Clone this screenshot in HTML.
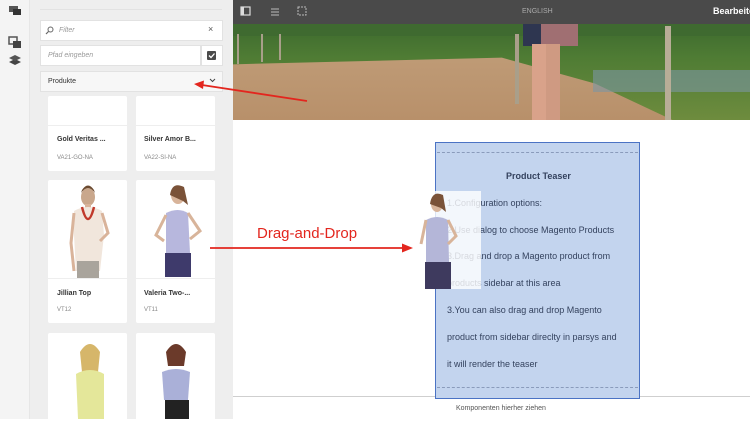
<!DOCTYPE html>
<html><head><meta charset="utf-8"><style>
*{margin:0;padding:0;box-sizing:border-box}
body{width:750px;height:419px;overflow:hidden;position:relative;background:#fff;font-family:"Liberation Sans",sans-serif}
.a{position:absolute}
.rail{left:0;top:0;width:30px;height:419px;background:#f4f4f4;border-right:1px solid #e6e6e6}
.panel{left:30px;top:0;width:203px;height:419px;background:#eeeeee}
.box{background:#fff;border:1px solid #e2e2e2;font-size:7px;color:#999}
.card{background:#fff;border-radius:2px}
.ct{font-size:7px;font-weight:bold;color:#333}
.cs{font-size:6px;color:#888}
.teaser{left:435px;top:142px;width:205px;height:257px;background:#c3d4ee;border:1.5px solid #4b73c4}
.tt{font-size:9px;color:#34425e;white-space:nowrap}
</style></head><body>
<div class="a rail"></div>
<svg class="a" style="left:8px;top:5px" width="14" height="60" viewBox="0 0 14 60">
<rect x="1" y="1" width="9" height="6" fill="#555"/><rect x="5" y="4" width="8" height="6" fill="#333"/>
<rect x="1" y="32" width="8" height="7" fill="none" stroke="#555" stroke-width="1.5"/><rect x="5" y="36" width="8" height="7" fill="#444"/>
<path d="M7 54 L13 57 L7 60 L1 57Z" fill="#444"/><path d="M7 50 L13 53 L7 56 L1 53Z" fill="#555"/>
</svg>
<div class="a panel"></div>
<div class="a" style="left:40px;top:9px;width:182px;height:1px;background:#e2e2e2"></div>
<div class="a box" style="left:40px;top:20px;width:183px;height:21px;padding:6px 0 0 18px;font-style:italic">Filter</div>
<svg class="a" style="left:45px;top:26px" width="9" height="9"><circle cx="5.5" cy="3.5" r="2.5" fill="none" stroke="#666" stroke-width="1"/><path d="M3.5 5.5 L1 8" stroke="#666" stroke-width="1.2"/></svg>
<div class="a" style="left:208px;top:24px;font-size:9px;color:#555">×</div>
<div class="a box" style="left:40px;top:45px;width:161px;height:21px;padding:6px 0 0 7px;font-style:italic">Pfad eingeben</div>
<div class="a box" style="left:201px;top:45px;width:22px;height:21px"></div>
<div class="a" style="left:207px;top:51px;width:9px;height:9px;background:#4a4a4a;border-radius:1px"></div>
<svg class="a" style="left:207px;top:51px" width="9" height="9"><path d="M2 4.5 L4 6.5 L7.5 2.5" stroke="#fff" stroke-width="1.3" fill="none"/></svg>
<div class="a box" style="left:40px;top:71px;width:183px;height:21px;padding:6px 0 0 7px;color:#333;background:#f7f7f7">Produkte</div>
<svg class="a" style="left:209px;top:78px" width="7" height="5"><path d="M1 1 L3.5 3.5 L6 1" stroke="#444" fill="none"/></svg>

<div class="a card" style="left:48px;top:96px;width:79px;height:75px"></div>
<div class="a" style="left:48px;top:125px;width:79px;height:1px;background:#eee"></div>
<div class="a ct" style="left:57px;top:136px">Gold Veritas ...</div>
<div class="a cs" style="left:57px;top:155px">VA21-GO-NA</div>
<div class="a card" style="left:136px;top:96px;width:79px;height:75px"></div>
<div class="a" style="left:136px;top:125px;width:79px;height:1px;background:#eee"></div>
<div class="a ct" style="left:144px;top:136px">Silver Amor B...</div>
<div class="a cs" style="left:144px;top:155px">VA22-SI-NA</div>

<div class="a card" style="left:48px;top:180px;width:79px;height:143px"></div>
<div class="a" style="left:48px;top:278px;width:79px;height:1px;background:#eee"></div>
<svg class="a" style="left:66px;top:183px" width="50" height="95">
<ellipse cx="22" cy="14" rx="7" ry="9" fill="#c9a78c"/><path d="M15 10 Q22 0 29 10 L28 7 Q22 -2 16 7Z" fill="#6b4a30"/>
<rect x="19" y="21" width="6" height="5" fill="#d9b39a"/>
<path d="M8 28 Q22 20 36 28 L38 52 L34 88 L10 88 L8 52Z" fill="#f1e6dc"/>
<path d="M16 24 Q22 48 28 24" stroke="#c0392b" stroke-width="2.5" fill="none"/>
<rect x="11" y="78" width="22" height="17" fill="#a9a49c"/>
<path d="M36 30 L42 50 L34 58" stroke="#d9b39a" stroke-width="3" fill="none"/><path d="M8 30 L5 60 L8 88" stroke="#d9b39a" stroke-width="3" fill="none"/>
</svg>
<div class="a ct" style="left:57px;top:290px">Jillian Top</div>
<div class="a cs" style="left:57px;top:307px">VT12</div>
<div class="a card" style="left:136px;top:180px;width:79px;height:143px"></div>
<div class="a" style="left:136px;top:278px;width:79px;height:1px;background:#eee"></div>
<svg class="a" style="left:150px;top:183px" width="60" height="95">
<ellipse cx="28" cy="12" rx="7" ry="9" fill="#d8b49a"/><path d="M20 12 Q22 -2 34 4 L38 22 L33 18Z" fill="#7a5238"/>
<path d="M16 30 Q28 24 38 30 L40 70 L16 70Z" fill="#b7b7dd"/>
<rect x="15" y="70" width="26" height="24" fill="#3e3a6b"/>
<path d="M38 30 L50 48 L40 56" stroke="#d8b49a" stroke-width="3" fill="none"/><path d="M16 32 L6 52 L14 58" stroke="#d8b49a" stroke-width="3" fill="none"/>
</svg>
<div class="a ct" style="left:144px;top:290px">Valeria Two-...</div>
<div class="a cs" style="left:144px;top:307px">VT11</div>

<div class="a card" style="left:48px;top:333px;width:79px;height:90px"></div>
<svg class="a" style="left:66px;top:336px" width="50" height="83">
<ellipse cx="24" cy="18" rx="7" ry="9" fill="#e0c0a4"/><path d="M14 16 Q24 0 34 16 L32 36 L16 36Z" fill="#d6b66a"/>
<path d="M10 38 Q24 30 38 38 L38 83 L12 83Z" fill="#e4e79a"/>
</svg>
<div class="a card" style="left:136px;top:333px;width:79px;height:90px"></div>
<svg class="a" style="left:150px;top:336px" width="50" height="83">
<ellipse cx="26" cy="18" rx="7" ry="9" fill="#d8b49a"/><path d="M16 16 Q26 0 36 16 L34 30 L18 30Z" fill="#6b3a2a"/>
<path d="M12 36 Q26 30 40 36 L38 64 L14 64Z" fill="#aab0d8"/>
<rect x="15" y="64" width="24" height="19" fill="#222"/>
</svg>

<div class="a" style="left:233px;top:0;width:517px;height:24px;background:#4a4a4a"></div>
<svg class="a" style="left:240px;top:6px" width="70" height="12">
<rect x="1" y="1" width="9" height="8" fill="none" stroke="#ddd" stroke-width="1.2"/><rect x="1" y="1" width="3" height="8" fill="#ddd"/>
<path d="M31 3 H39 M31 6 H39 M31 9 H39" stroke="#bbb" stroke-width="1"/>
<rect x="58" y="1" width="8" height="8" fill="none" stroke="#bbb" stroke-width="1" stroke-dasharray="2 1"/>
</svg>
<div class="a" style="left:522px;top:8px;font-size:7px;color:#aaa">ENGLISH</div>
<div class="a" style="left:713px;top:6px;font-size:9px;font-weight:bold;color:#fff">Bearbeite</div>

<div class="a" style="left:233px;top:24px;width:517px;height:96px;overflow:hidden;background:linear-gradient(#3d6a2e 0,#4f7c34 35%,#6e8c3e 100%)">
<div class="a" style="left:0;top:0;width:517px;height:96px;background:linear-gradient(#c2a07c,#b8906a);clip-path:polygon(0 42%,52% 35%,70% 62%,85% 100%,0 100%)"></div>
<div class="a" style="left:0;top:0;width:517px;height:12px;background:#3f6a30"></div>
<div class="a" style="left:360px;top:46px;width:157px;height:22px;background:#7b96a4;opacity:.6"></div>
<div class="a" style="left:290px;top:0;width:55px;height:22px;background:#a06f72"></div>
<div class="a" style="left:290px;top:0;width:18px;height:22px;background:#2e3650"></div>
<div class="a" style="left:299px;top:20px;width:14px;height:76px;background:#d9a28a"></div>
<div class="a" style="left:313px;top:20px;width:14px;height:76px;background:#cf9a82"></div>
<div class="a" style="left:432px;top:2px;width:6px;height:94px;background:#b8ad97"></div>
<div class="a" style="left:282px;top:10px;width:4px;height:70px;background:#a99f8a"></div>
<div class="a" style="left:4px;top:10px;width:2px;height:30px;background:#a99f8a"></div>
<div class="a" style="left:28px;top:10px;width:2px;height:28px;background:#a99f8a"></div>
<div class="a" style="left:46px;top:10px;width:2px;height:26px;background:#a99f8a"></div>
</div>

<div class="a" style="left:233px;top:396px;width:517px;height:1px;background:#cfcfcf"></div>
<div class="a" style="left:456px;top:405px;font-size:7px;color:#555">Komponenten hierher ziehen</div>

<div class="a teaser"></div>
<div class="a" style="left:437px;top:152px;width:201px;border-top:1px dashed #8a9bbb"></div>
<div class="a" style="left:437px;top:387px;width:201px;border-top:1px dashed #8a9bbb"></div>
<div class="a tt" style="left:506px;top:171px;font-weight:bold">Product Teaser</div>
<div class="a tt" style="left:447px;top:198px">1.Configuration options:</div>
<div class="a tt" style="left:447px;top:225px">2.Use dialog to choose Magento Products</div>
<div class="a tt" style="left:447px;top:251px">3.Drag and drop a Magento product from</div>
<div class="a tt" style="left:447px;top:278px">products sidebar at this area</div>
<div class="a tt" style="left:447px;top:305px">3.You can also drag and drop Magento</div>
<div class="a tt" style="left:447px;top:332px">product from sidebar direclty in parsys and</div>
<div class="a tt" style="left:447px;top:359px">it will render the teaser</div>

<div class="a" style="left:420px;top:191px;width:61px;height:98px;background:rgba(255,255,255,.8)"></div>
<svg class="a" style="left:418px;top:192px" width="50" height="97">
<ellipse cx="19" cy="12" rx="6" ry="8" fill="#d8b49a"/><path d="M12 12 Q14 -2 25 3 L28 20 L23 16Z" fill="#7a5238"/>
<path d="M8 28 Q19 22 30 28 L31 70 L8 70Z" fill="#b4b6d8"/>
<rect x="7" y="70" width="26" height="27" fill="#3e3a5e"/>
<path d="M30 28 L38 44 L30 52" stroke="#d8b49a" stroke-width="3" fill="none"/><path d="M8 28 L3 52" stroke="#d8b49a" stroke-width="3" fill="none"/>
</svg>

<svg class="a" style="left:0;top:0" width="750" height="419">
<path d="M210 248 L404 248" stroke="#e3261e" stroke-width="1.8"/>
<path d="M413 248 L402 243.5 L402 252.5Z" fill="#e3261e"/>
<path d="M307 101 L202 85" stroke="#e3261e" stroke-width="1.8"/>
<path d="M194 84 L204 80.5 L203 89Z" fill="#e3261e"/>
<text x="257" y="238" font-family="Liberation Sans, sans-serif" font-size="15" fill="#e3261e">Drag-and-Drop</text>
</svg>
</body></html>
